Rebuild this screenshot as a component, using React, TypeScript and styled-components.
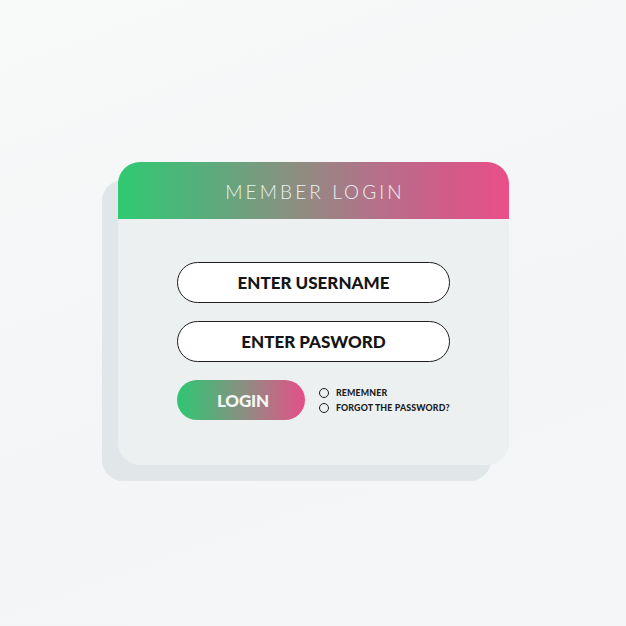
import styled, { createGlobalStyle } from "styled-components";

const GlobalStyle = createGlobalStyle`
    html, body {
        margin: 0;
        padding: 0;
    }
    body {
        width: 626px;
        height: 626px;
        overflow: hidden;
        background: linear-gradient(160deg, #f8f9f9 0%, #f3f5f6 60%, #f4f6f7 100%);
        font-family: "Lato", "Liberation Sans", sans-serif;
    }
`;

const Page = styled.div`
    width: 626px;
    height: 626px;
    box-sizing: border-box;
    padding: 162px 0 0 118px;
`;

const Card = styled.div`
    width: 391px;
    height: 303px;
    background: #edf0f1;
    border-radius: 22px;
    box-shadow: -17px 17px 0 -1px #e1e6e8;
    display: flex;
    flex-direction: column;
`;

const Header = styled.div`
    height: 57px;
    border-radius: 22px 22px 0 0;
    background: linear-gradient(90deg, #2fca72 0%, #58ad7c 22%, #8b8f80 45%, #b4718a 65%, #d15b87 85%, #ea4f89 100%);
    display: flex;
    align-items: center;
    justify-content: center;
    color: #e9f3ee;
    font-size: 19px;
    font-weight: 300;
    letter-spacing: 3.1px;
    padding: 2px 0 0 3px;
    box-sizing: border-box;
`;

const Body = styled.div`
    display: flex;
    flex-direction: column;
    gap: 18px;
    padding: 43px 59px 0;
`;

const Field = styled.div`
    height: 41px;
    box-sizing: border-box;
    border: 1.5px solid #1e1e1e;
    border-radius: 21px;
    background: #fff;
    display: flex;
    align-items: center;
    justify-content: center;
    font-size: 17px;
    font-weight: 900;
    color: #151515;
`;

const Row = styled.div`
    display: flex;
    align-items: center;
    gap: 14px;
    white-space: nowrap;
`;

const LoginButton = styled.button`
    flex-shrink: 0;
    width: 128px;
    height: 40px;
    border: none;
    border-radius: 20px;
    background: linear-gradient(90deg, #2fc772 0%, #62a77c 30%, #9a8583 60%, #e64f88 100%);
    color: #f5f7f5;
    font-family: inherit;
    font-size: 17px;
    font-weight: 900;
    letter-spacing: -0.2px;
    padding: 0 0 0 4px;
`;

const Options = styled.div`
    display: flex;
    flex-direction: column;
    gap: 4px;
`;

const Option = styled.label`
    display: flex;
    align-items: center;
    gap: 7px;
    font-size: 8.8px;
    font-weight: 900;
    color: #1c1c1c;
    letter-spacing: 0.15px;
`;

const Radio = styled.span`
    flex-shrink: 0;
    width: 10px;
    height: 10px;
    box-sizing: border-box;
    border: 1.5px solid #1c1c1c;
    border-radius: 50%;
`;

export default function App() {
    return (
        <>
            <GlobalStyle />
            <Page>
                <Card>
                    <Header>MEMBER LOGIN</Header>
                    <Body>
                        <Field>ENTER USERNAME</Field>
                        <Field>ENTER PASWORD</Field>
                        <Row>
                            <LoginButton>LOGIN</LoginButton>
                            <Options>
                                <Option>
                                    <Radio />
                                    REMEMNER
                                </Option>
                                <Option>
                                    <Radio />
                                    FORGOT THE PASSWORD?
                                </Option>
                            </Options>
                        </Row>
                    </Body>
                </Card>
            </Page>
        </>
    );
}
